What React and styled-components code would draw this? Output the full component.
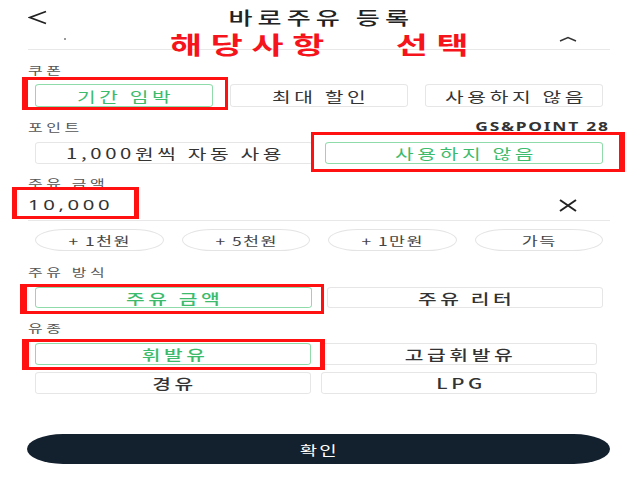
import React, { useState } from "react";
import styled, { createGlobalStyle } from "styled-components";

const GlobalStyle = createGlobalStyle`
  body {
    margin: 0;
    background: #ffffff;
    font-family: "Noto Sans CJK KR", "Noto Sans", sans-serif;
    color: #222;
  }
`;

// the screen shot is stretched sideways, so the glyphs are widened too
const Wide = styled.span`
  display: inline-block;
  white-space: pre;
  transform: scaleX(1.45);
  transform-origin: ${(p) => p.$origin || "center"};
  letter-spacing: ${(p) => p.$ls ?? 2.5}px;
  word-spacing: ${(p) => p.$ws || 0}px;
  padding-left: ${(p) => (p.$origin ? 0 : p.$ls ?? 2.5)}px;
`;

const Page = styled.div`
  position: relative;
  width: 640px;
  height: 480px;
  box-sizing: border-box;
  padding: 0 30px 0 28px;
  display: flex;
  flex-direction: column;
  overflow: hidden;
`;

const Header = styled.div`
  height: 34px;
  display: grid;
  grid-template-columns: 40px 1fr 40px;
  align-items: center;
`;

const BackBtn = styled.div`
  display: flex;
  align-items: center;
  height: 34px;
`;

const Title = styled.h1`
  margin: 0;
  text-align: center;
  font-size: 18px;
  line-height: 20px;
  font-weight: 500;
  color: #222;
`;

const SubRow = styled.div`
  height: 15px;
  display: flex;
  justify-content: space-between;
  align-items: center;
  border-bottom: 1px solid #e8e8e8;
  padding: 0 32px 0 36px;
`;

const Dot = styled.span`
  width: 2px;
  height: 2px;
  border-radius: 1px;
  background: #777;
  margin-top: -6px;
`;

const Annotation = styled.div`
  position: absolute;
  top: 33px;
  left: 170px;
  font-size: 24px;
  font-weight: 700;
  color: #f5141c;
  line-height: 22px;
  pointer-events: none;
`;

const Label = styled.div`
  margin-top: ${(p) => p.$mt || 13}px;
  height: 14px;
  line-height: 14px;
  font-size: 11px;
  color: #555;
  display: flex;
  justify-content: space-between;
`;

const PointInfo = styled.span`
  font-family: "Noto Sans", sans-serif;
  font-size: 12px;
  font-weight: 700;
  color: #333;
`;

const Row = styled.div`
  margin-top: ${(p) => p.$mt || 8}px;
  display: grid;
  grid-template-columns: repeat(${(p) => p.$cols}, 1fr);
  column-gap: ${(p) => p.$gap}px;
  row-gap: 7px;
  padding: 0 ${(p) => p.$pr ?? 7}px 0 7px;
`;

const Option = styled.div`
  height: ${(p) => p.$h || 22}px;
  box-sizing: border-box;
  border: 1px solid ${(p) => (p.$on ? "#8fdcaa" : "#e6e6e6")};
  border-radius: 4px / 3px;
  background: #fff;
  display: flex;
  align-items: center;
  justify-content: center;
  font-size: 14px;
  color: ${(p) => (p.$on ? "#3dbb6c" : "#333")};
  font-weight: ${(p) => (p.$bold ? 500 : 400)};
  cursor: pointer;
  flex: 1;
`;

const Pill = styled.div`
  height: 22px;
  box-sizing: border-box;
  border: 1px solid #e4e4e4;
  border-radius: 30px / 11px;
  display: flex;
  align-items: center;
  justify-content: center;
  font-size: 12px;
  color: #444;
`;

const Highlight = styled.div`
  position: relative;
  display: flex;
`;

const Mark = styled.span`
  position: absolute;
  top: ${(p) => -p.$t}px;
  bottom: ${(p) => -p.$b}px;
  left: ${(p) => -p.$l}px;
  right: ${(p) => -p.$r}px;
  border: 3px solid #ff1111;
  border-left-width: ${(p) => p.$lw || 3}px;
  border-right-width: ${(p) => p.$rw || 3}px;
  pointer-events: none;
`;

const AmountRow = styled.div`
  height: 30px;
  display: flex;
  align-items: center;
  justify-content: space-between;
  border-bottom: 1px solid #e8e8e8;
  padding-right: 32px;
`;

const Amount = styled.div`
  position: relative;
  width: 82px;
  font-family: "Noto Sans", sans-serif;
  font-size: 14px;
  color: #333;
  height: 30px;
  line-height: 30px;
`;

const Confirm = styled.button`
  margin-top: 40px;
  margin-left: -1px;
  height: 30px;
  border: none;
  border-radius: 36px / 15px;
  background: #13202e;
  color: #fff;
  font-family: inherit;
  font-size: 13px;
`;

const BackIcon = () => (
  <svg width="20" height="15" viewBox="0 0 20 15">
    <polyline points="18,1.5 2,7.5 18,13.5" fill="none" stroke="#222" strokeWidth="1.8" />
  </svg>
);

const ChevronUp = () => (
  <svg width="20" height="6" viewBox="0 0 20 6" style={{ marginTop: "-6px" }}>
    <polyline points="2,5 10,1.5 18,5" fill="none" stroke="#333" strokeWidth="1.4" />
  </svg>
);

const CloseIcon = () => (
  <svg width="20" height="13" viewBox="0 0 20 13">
    <path d="M2 1 L18 12 M18 1 L2 12" stroke="#222" strokeWidth="2" fill="none" />
  </svg>
);

const coupons = ["기간 임박", "최대 할인", "사용하지 않음"];
const pills = ["+ 1천원", "+ 5천원", "+ 1만원", "가득"];

const App = () => {
  const [coupon, setCoupon] = useState(0);
  const [point, setPoint] = useState(1);
  const [method, setMethod] = useState(0);
  const [fuel, setFuel] = useState(0);

  return (
    <Page>
      <GlobalStyle />
      <Header>
        <BackBtn>
          <BackIcon />
        </BackBtn>
        <Title>
          <Wide $ls={3.5}>바로주유 등록</Wide>
        </Title>
        <span />
      </Header>
      <SubRow>
        <Dot />
        <ChevronUp />
      </SubRow>
      <Annotation>
        <Wide $ls={6} $ws={32} $origin="left">해당사항 선택</Wide>
      </Annotation>

      <Label>
        <Wide $origin="left">쿠폰</Wide>
      </Label>
      <Row $cols={3} $gap={17} $mt={7}>
        {coupons.map((c, i) => (
          <Highlight key={c}>
            <Option $h={23} $on={coupon === i} onClick={() => setCoupon(i)}>
              <Wide>{c}</Wide>
            </Option>
            {i === 0 && <Mark $t={7} $b={3} $l={13} $r={15} $lw={6} />}
          </Highlight>
        ))}
      </Row>

      <Label>
        <Wide $origin="left">포인트</Wide>
        <PointInfo>
          <Wide $ls={1.2} $origin="right">GS&amp;POINT 28</Wide>
        </PointInfo>
      </Label>
      <Row $cols={2} $gap={12}>
        <Option $on={point === 0} onClick={() => setPoint(0)}>
          <Wide>1,000원씩 자동 사용</Wide>
        </Option>
        <Highlight>
          <Option $on={point === 1} onClick={() => setPoint(1)}>
            <Wide>사용하지 않음</Wide>
          </Option>
          <Mark $t={10} $b={8} $l={14} $r={22} $rw={6} />
        </Highlight>
      </Row>

      <Label $mt={12}>
        <Wide $origin="left">주유 금액</Wide>
      </Label>
      <AmountRow>
        <Amount>
          <Wide $origin="left">10,000</Wide>
          <Mark $t={3} $b={-1} $l={16} $r={29} $lw={5} $rw={5} />
        </Amount>
        <CloseIcon />
      </AmountRow>

      <Row $cols={4} $gap={18}>
        {pills.map((p) => (
          <Pill key={p}>
            <Wide $ls={1}>{p}</Wide>
          </Pill>
        ))}
      </Row>

      <Label $mt={14}>
        <Wide $origin="left">주유 방식</Wide>
      </Label>
      <Row $cols={2} $gap={15}>
        <Highlight>
          <Option $h={21} $on={method === 0} onClick={() => setMethod(0)} $bold>
            <Wide>주유 금액</Wide>
          </Option>
          <Mark $t={3} $b={6} $l={15} $r={12} $lw={7} />
        </Highlight>
        <Option $h={21} $on={method === 1} onClick={() => setMethod(1)} $bold>
          <Wide>주유 리터</Wide>
        </Option>
      </Row>

      <Label>
        <Wide $origin="left">유종</Wide>
      </Label>
      <Row $cols={2} $gap={10} $pr={13}>
        <Highlight>
          <Option $on={fuel === 0} onClick={() => setFuel(0)} $bold>
            <Wide>휘발유</Wide>
          </Option>
          <Mark $t={4} $b={5} $l={13} $r={14} $lw={7} $rw={5} />
        </Highlight>
        <Option $on={fuel === 1} onClick={() => setFuel(1)} $bold>
          <Wide>고급휘발유</Wide>
        </Option>
        <Option $on={fuel === 2} onClick={() => setFuel(2)} $bold>
          <Wide>경유</Wide>
        </Option>
        <Option $on={fuel === 3} onClick={() => setFuel(3)} $bold>
          <Wide>LPG</Wide>
        </Option>
      </Row>

      <Confirm>
        <Wide $ls={1.5}>확인</Wide>
      </Confirm>
    </Page>
  );
};

export default App;
